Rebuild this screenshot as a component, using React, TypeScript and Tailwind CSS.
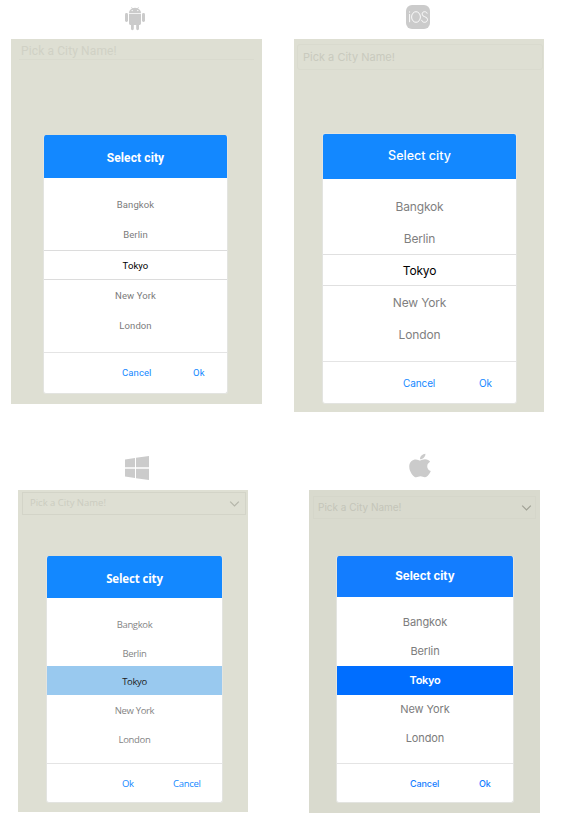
import React from "react";
import { FaApple } from "react-icons/fa";

type Row = { label: string; className: string };
type DialogProps = {
  className: string;
  header: string;
  title: string;
  list: string;
  rows: Row[];
  footer: string;
  actions: Row[];
};

function PickerDialog({ className, header, title, list, rows, footer, actions }: DialogProps) {
  return (
    <div className={`flex flex-col overflow-hidden rounded-[3px] border-[#e3e4e0] bg-white ${className}`}>
      <div className={`flex shrink-0 items-center justify-center text-white ${header}`}>
        <span className={`whitespace-nowrap ${title}`}>Select city</span>
      </div>
      <div className={`flex flex-col ${list}`}>
        {rows.map((r) => (
          <div key={r.label} className={`flex shrink-0 items-center justify-center whitespace-nowrap ${r.className}`}>
            {r.label}
          </div>
        ))}
      </div>
      <div className={`flex flex-1 items-center border-t border-[#e4e4e4] ${footer}`}>
        {actions.map((a) => (
          <span key={a.label} className={`whitespace-nowrap ${a.className}`}>{a.label}</span>
        ))}
      </div>
    </div>
  );
}

function Chevron({ className }: { className: string }) {
  return (
    <svg width="11" height="8" viewBox="0 0 11 8" fill="none" className={className}>
      <path d="M1.2 1.6 5.5 5.9 9.8 1.6" stroke="currentColor" strokeWidth="1.2" />
    </svg>
  );
}

function AndroidIcon() {
  return (
    <svg width="20" height="24" viewBox="0 0 20 24" fill="#cbcbcb">
      <path d="M4 6.3C4 3.7 5.4 2.3 7 1.6L6.1.3l.5-.3 1 1.3a7 7 0 0 1 4.8 0l1-1.3.5.3L13 1.6c1.6.7 3 2.1 3 4.7Z" />
      <circle cx="7.2" cy="3.6" r=".7" fill="#fff" />
      <circle cx="12.8" cy="3.6" r=".7" fill="#fff" />
      <path d="M4 7.1h12v9.5a1.4 1.4 0 0 1-1.4 1.4H14v3.8a1.4 1.4 0 0 1-2.8 0V18H8.8v3.8a1.4 1.4 0 0 1-2.8 0V18h-.6A1.4 1.4 0 0 1 4 16.6Z" />
      <rect x="0" y="6" width="3" height="9" rx="1.4" />
      <rect x="17" y="6" width="3" height="9" rx="1.4" />
    </svg>
  );
}

function WindowsIcon() {
  return (
    <svg width="24" height="24" viewBox="0 0 24 24" fill="#cbcbcb">
      <path d="M0 3.4 10 2v9.2H0ZM11 1.8 24 0v11.2H11ZM0 12.8h10V22L0 20.6ZM11 12.8h13V24l-13-1.8Z" />
    </svg>
  );
}

const androidRow = "h-[30px] text-[#7b7b7b]";
const iosRow = "h-[32px] text-[#7f7f7f]";
const windowsRow = "h-[29px] pt-[2px] text-[#858585]";
const macRow = "h-[29px] text-[#7c7c7c]";

export default function App() {
  return (
    <div className="flex h-[819px] w-[588px] flex-col overflow-hidden bg-white">
      <div className="flex h-[445px] items-start">
        <section className="ml-[11px] w-[251px]">
          <div className="flex h-[39px] items-start pt-[7px] pl-[114px]">
            <AndroidIcon />
          </div>
          <div className="flex h-[365px] flex-col bg-[#dedfd3] font-['Roboto',sans-serif]">
            <div className="mx-[8px] flex h-[21px] items-center border-b border-[#d9dace] pt-[3px] pl-[2px] text-[12px] tracking-[0.12px] text-[#d0d1c5]">
              Pick a City Name!
            </div>
            <PickerDialog
              className="mt-[75px] ml-[32px] h-[259px] w-[185px] border-x border-b"
              header="h-[43px] bg-[#1388ff] pt-[2px]"
              title="text-[12px] font-bold tracking-[0.1px]"
              list="h-[174px] pt-[12px] text-[9.5px] tracking-[0.1px]"
              rows={[
                { label: "Bangkok", className: androidRow + " pt-px" },
                { label: "Berlin", className: androidRow + " pt-px" },
                { label: "Tokyo", className: "h-[30px] border-y border-[#dcdcdc] pt-[2px] text-black" },
                { label: "New York", className: "mt-px " + androidRow },
                { label: "London", className: androidRow },
              ]}
              footer="pt-px text-[9.5px] tracking-[0.1px] text-[#1388ff]"
              actions={[
                { label: "Cancel", className: "ml-[78px] w-[71px]" },
                { label: "Ok", className: "" },
              ]}
            />
          </div>
        </section>

        <section className="ml-[32px] w-[250px]">
          <div className="flex h-[39px] items-start pt-[5px] pl-[112px]">
            <div className="flex h-[24px] w-[24px] items-center justify-center rounded-[6px] bg-[#cbcbcb]">
              <svg width="24" height="24" viewBox="0 0 24 24" fill="none" stroke="#fff" strokeWidth=".9">
                <path d="M3.6 9v8.2M3.6 6.4v1.2" />
                <ellipse cx="10" cy="12" rx="4.4" ry="5.3" />
                <path d="M21.2 8.6c-.3-1.2-1.2-1.9-2.5-1.9-1.5 0-2.6.9-2.6 2.4 0 3.4 5.4 1.9 5.4 5.4 0 1.7-1.2 2.8-2.9 2.8-1.7 0-2.8-.9-2.9-2.4" />
              </svg>
            </div>
          </div>
          <div className="flex h-[373px] flex-col bg-[#dedfd3] pt-[5px] font-['Inter',sans-serif]">
            <div className="mr-px ml-[3px] flex h-[26px] items-center rounded-[3px] border border-[#d9dace] pl-[5px] text-[11px] text-[#c9cabe]">
              Pick a City Name!
            </div>
            <PickerDialog
              className="mt-[63px] ml-[28px] h-[271px] w-[195px] border"
              header="h-[45px] bg-[#1388ff]"
              title="text-[12.5px] font-medium"
              list="h-[182px] pt-[12px] text-[12px] tracking-[-0.15px]"
              rows={[
                { label: "Bangkok", className: iosRow },
                { label: "Berlin", className: "h-[31px] text-[#7f7f7f]" },
                { label: "Tokyo", className: "h-[32px] border-y border-[#e0e0e0] pt-[2px] text-black" },
                { label: "New York", className: iosRow + " pt-px" },
                { label: "London", className: iosRow + " pt-px" },
              ]}
              footer="pt-px text-[10px] tracking-[-0.1px] text-[#1388ff]"
              actions={[
                { label: "Cancel", className: "ml-[80px] w-[76px]" },
                { label: "Ok", className: "" },
              ]}
            />
          </div>
        </section>
      </div>

      <div className="flex h-[374px] items-start">
        <section className="ml-[18px] w-[230px]">
          <div className="flex h-[45px] items-start pt-[11px] pl-[107px]">
            <WindowsIcon />
          </div>
          <div className="flex h-[322px] flex-col bg-[#dedfd3] pt-[2px] font-['Open_Sans',sans-serif]">
            <div className="mr-[2px] ml-[4px] flex h-[23px] items-center justify-between border border-[#d3d4c8] pr-[5px] pl-[7px] text-[9.5px] text-[#cbccc0]">
              <span>Pick a City Name!</span>
              <Chevron className="text-[#b4b5a9]" />
            </div>
            <PickerDialog
              className="mt-[41px] ml-[28px] h-[247px] w-[177px] border-x border-b"
              header="h-[42px] bg-[#1388ff] pt-[3px]"
              title="text-[11.5px] font-bold tracking-[-0.15px]"
              list="h-[165px] pt-[12px] text-[9.5px] tracking-[-0.35px]"
              rows={[
                { label: "Bangkok", className: "h-[29px] pt-[2px] text-[#858585]" },
                { label: "Berlin", className: "h-[27px] pt-[3px] text-[#858585]" },
                { label: "Tokyo", className: "h-[29px] bg-[#99c9ef] pt-[3px] text-[#1c1c1c]" },
                { label: "New York", className: "mt-px " + windowsRow },
                { label: "London", className: windowsRow },
              ]}
              footer="pt-[2px] text-[9.5px] tracking-[-0.3px] text-[#1388ff]"
              actions={[
                { label: "Ok", className: "ml-[75px] w-[51px]" },
                { label: "Cancel", className: "" },
              ]}
            />
          </div>
        </section>

        <section className="ml-[61px] w-[231px]">
          <div className="flex h-[45px] items-start pt-[7px] pl-[100px]">
            <FaApple className="h-[27px] w-[22px] text-[#cbcbcb]" preserveAspectRatio="none" />
          </div>
          <div className="flex h-[323px] flex-col bg-[#d9dace] pt-[6px] font-['Inter',sans-serif]">
            <div className="mr-[4px] ml-[4px] flex h-[23px] items-center justify-between border border-[#d5d6ca] pr-[3px] pl-[4px] text-[10px] text-[#c4c5b9]">
              <span>Pick a City Name!</span>
              <Chevron className="text-[#a0a195]" />
            </div>
            <PickerDialog
              className="mt-[37px] ml-[27px] h-[247px] w-[178px] border-x border-b"
              header="h-[41px] bg-[#137dff]"
              title="text-[11.5px] font-bold"
              list="h-[166px] pt-[11px] text-[11px] tracking-[-0.1px]"
              rows={[
                { label: "Bangkok", className: macRow },
                { label: "Berlin", className: macRow },
                { label: "Tokyo", className: "h-[29px] bg-[#006eff] text-white font-semibold tracking-[-0.3px]" },
                { label: "New York", className: macRow },
                { label: "London", className: macRow },
              ]}
              footer="pt-px text-[9px] tracking-[-0.1px] text-[#137dff] font-medium"
              actions={[
                { label: "Cancel", className: "ml-[73px] w-[69px]" },
                { label: "Ok", className: "" },
              ]}
            />
          </div>
        </section>
      </div>
    </div>
  );
}
